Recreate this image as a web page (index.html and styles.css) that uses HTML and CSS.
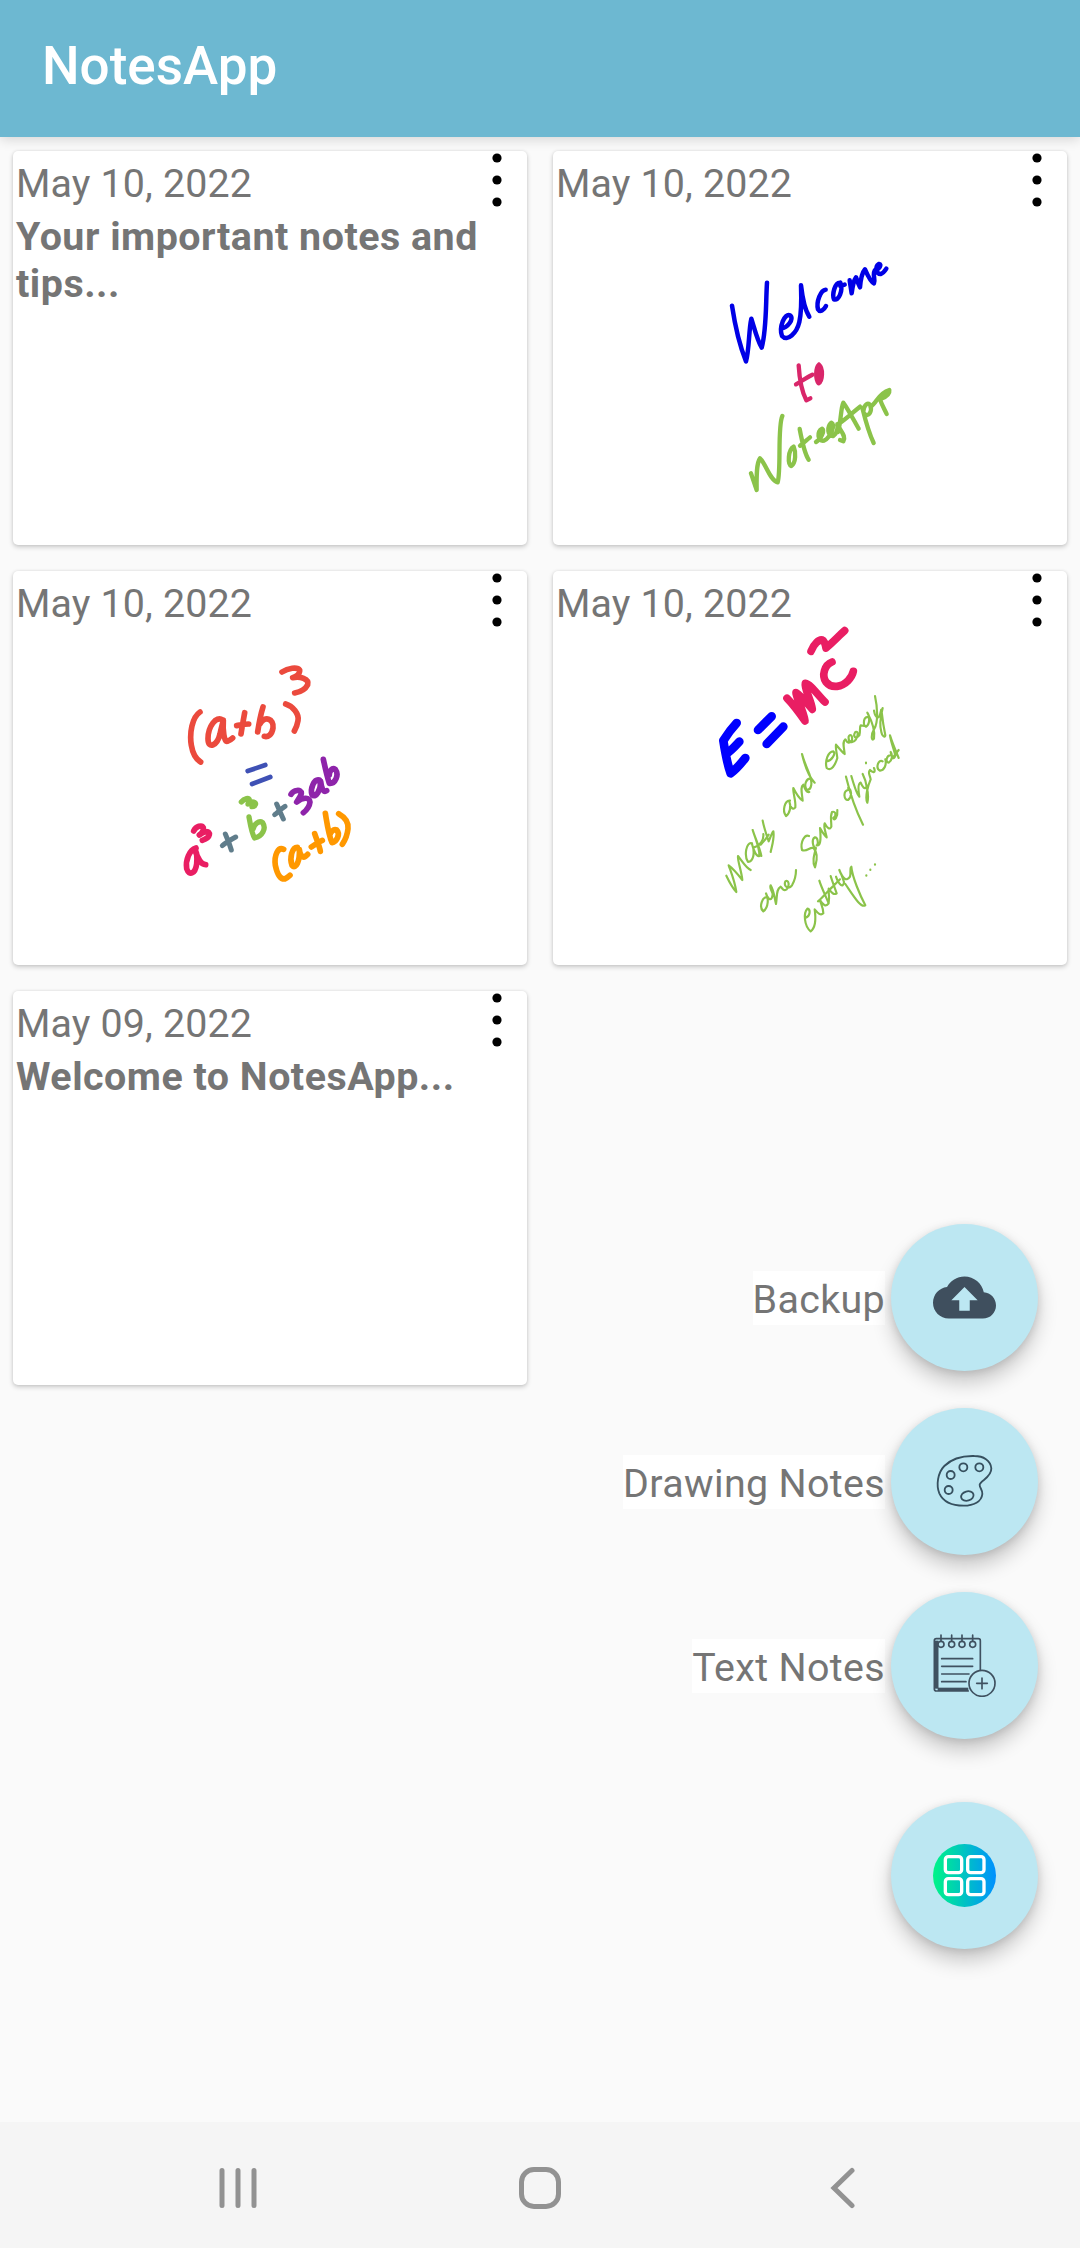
FILE: index.html
```html
<!DOCTYPE html>
<html lang="en">
  <head>
    <meta charset="UTF-8" />
    <meta name="viewport" content="width=device-width, initial-scale=1.0" />
    <title>NotesApp</title>
    <link rel="stylesheet" href="styles.css">
  </head>
  <body>
    <header class="toolbar">
      <h1>NotesApp</h1>
    </header>
    <main class="notes">
      <div class="card">
        <div class="date">May 10, 2022</div>
        <p class="text">Your important notes and tips...</p>
        <svg class="menu" viewBox="0 0 10 54"><circle cx="5" cy="5" r="4.6" /><circle cx="5" cy="27" r="4.6" /><circle cx="5" cy="49" r="4.6" /></svg>
      </div>
      <div class="card">
        <div class="date">May 10, 2022</div>
        <svg class="menu" viewBox="0 0 10 54"><circle cx="5" cy="5" r="4.6" /><circle cx="5" cy="27" r="4.6" /><circle cx="5" cy="49" r="4.6" /></svg>
        <svg class="drawing" viewBox="-441 -267 1542 1182">
          <g stroke="#0000e6" stroke-width="13.5">
            <path d="M96 197C104 250 118 315 138 364C148 330 146 270 154 236C164 268 172 302 185 323C200 270 197 190 201 128" />
            <path d="M244 265C262 264 284 236 270 226C254 218 236 262 246 288C262 306 290 280 298 246C306 210 304 165 303 136C308 180 316 212 328 230" />
            <path d="M377 149C362 150 348 186 354 208C360 218 372 210 378 198" />
            <path d="M421 128C404 126 396 164 402 178C416 184 430 152 421 128M421 138L434 134" />
            <path d="M449 121L455 160C458 136 462 120 468 112C472 124 476 134 480 142C482 118 488 96 495 88C502 104 512 126 522 130C528 118 514 100 527 88C536 92 548 70 536 72C524 80 530 104 542 102C550 100 554 94 559 86" />
          </g>
          <g stroke="#d9266a" stroke-width="13">
            <path d="M296 376C298 410 306 456 319 481L331 475M288 433C304 424 320 412 337 404" />
            <path d="M357 374C346 384 346 418 356 430C368 424 370 384 357 374M357 392V414" />
          </g>
          <g stroke="#8bc34a" stroke-width="13">
            <path d="M153 700L170 750C170 716 168 672 180 655C196 668 210 722 233 727C244 690 232 560 247 528" />
            <path d="M281 620C264 630 262 672 274 678C288 668 288 636 281 620" />
            <path d="M299 567C306 604 314 642 326 659M300 617C312 608 320 600 330 592" />
            <path d="M348 606C362 598 376 572 366 566C350 572 352 606 372 602C394 590 406 554 394 548C380 560 382 590 400 588C412 580 414 562 412 552C420 572 440 588 430 604L420 600" />
            <path d="M414 576C424 540 422 504 430 488C446 510 462 542 476 566M424 546C444 532 462 514 480 500" />
            <path d="M487 504C496 540 508 582 521 609M490 516C492 492 506 484 512 498C516 516 506 528 498 524" />
            <path d="M512 500C530 490 534 460 568 450C570 462 556 472 540 478C546 496 554 508 560 522" />
          </g>
        </svg>
      </div>
      <div class="card">
        <div class="date">May 10, 2022</div>
        <svg class="menu" viewBox="0 0 10 54"><circle cx="5" cy="5" r="4.6" /><circle cx="5" cy="27" r="4.6" /><circle cx="5" cy="49" r="4.6" /></svg>
        <svg class="drawing" viewBox="-441 -207 1542 1182">
          <g stroke="#eb4a3d" stroke-width="17">
            <path d="M120 216C96 232 88 280 94 316C98 340 108 358 122 366" />
            <path d="M188 240C168 226 144 260 144 296C144 330 172 316 180 282C184 262 188 250 190 240C188 270 192 306 202 304C208 302 214 298 218 294" />
            <path d="M254 218C250 240 246 262 243 282M230 257C242 255 254 252 266 252" />
            <path d="M309 201C300 230 296 256 293 276M300 252C314 226 342 236 339 264C336 284 324 292 313 289" />
            <path d="M377 192C398 198 418 222 414 242C412 256 408 264 403 273" />
            <path d="M366 96C384 84 412 80 419 90C420 102 408 110 398 113C420 108 448 116 443 134C436 148 420 156 404 159" />
          </g>
          <g stroke="#3f51b5" stroke-width="14">
            <path d="M263 393L316 375M276 432L331 411" />
          </g>
          <g stroke="#e91e63" stroke-width="17">
            <path d="M108 624C88 630 76 660 80 686C88 710 106 700 110 672C112 650 110 632 104 628C112 650 120 674 137 674" />
            <path d="M101 573C108 558 126 554 130 563C132 574 124 580 118 585C134 572 150 572 148 584C146 594 136 598 127 601" />
          </g>
          <g stroke="#607d8b" stroke-width="15">
            <path d="M196 582C204 600 210 616 214 630M187 617C200 606 214 598 227 591" />
            <path d="M350 492C358 510 364 524 370 537M344 524C354 516 364 506 375 499" />
          </g>
          <g stroke="#8bc34a" stroke-width="16">
            <path d="M267 531C272 560 276 584 284 594C306 590 320 566 308 548C296 540 282 554 280 566" />
            <path d="M244 486C252 476 270 470 268 482C266 488 264 490 264 492C276 482 290 486 286 494C284 500 280 500 276 500" />
          </g>
          <g stroke="#8e24aa" stroke-width="17">
            <path d="M393 463C400 450 424 446 424 460C422 470 414 480 410 486C430 470 450 472 450 486C448 504 438 512 430 518" />
            <path d="M478 420C462 416 450 446 456 464C468 476 482 450 482 424C484 440 488 460 500 452" />
            <path d="M490 358C496 386 502 412 508 430C526 432 538 404 526 388C516 382 508 394 508 404" />
          </g>
          <g stroke="#ff9800" stroke-width="17">
            <path d="M371 628C354 620 342 646 346 676C352 704 362 718 374 717C382 714 386 710 390 706" />
            <path d="M412 622C396 622 388 654 396 676C408 690 420 662 418 628C420 646 428 660 443 643" />
            <path d="M464 581C470 600 478 616 481 634M454 621C464 614 476 606 487 601" />
            <path d="M496 520C502 556 506 586 516 608C530 606 542 582 530 570C520 566 512 576 510 584" />
            <path d="M536 521C552 530 566 546 564 566C562 586 554 602 547 613" />
          </g>
        </svg>
      </div>
      <div class="card">
        <div class="date">May 10, 2022</div>
        <svg class="menu" viewBox="0 0 10 54"><circle cx="5" cy="5" r="4.6" /><circle cx="5" cy="27" r="4.6" /><circle cx="5" cy="49" r="4.6" /></svg>
        <svg class="drawing" viewBox="-411 -117 1542 1182">
          <g stroke="#0000ff" stroke-width="26">
            <path d="M140 339C124 356 110 376 100 392C106 430 112 464 122 490C138 478 152 462 166 444M108 432C122 424 136 408 148 395" />
            <path d="M204 360L245 319M230 402L280 350" />
          </g>
          <g stroke="#e91e63" stroke-width="23">
            <path d="M291 265C306 280 330 312 345 333C340 300 318 262 318 248C332 256 352 280 367 298C364 270 342 236 346 220C362 222 384 256 405 276" />
            <path d="M426 156C404 164 394 196 408 216C426 238 456 230 474 212C484 202 488 194 490 184" />
            <path d="M363 124C370 104 388 84 400 92C406 98 406 106 408 114C428 98 446 78 464 62" />
          </g>
          <g stroke="#8bc34a" stroke-width="6.5">
            <path d="M109 797C118 816 128 834 139 846C134 812 122 784 116 766C130 776 146 796 157 810C154 780 142 752 144 738C156 752 166 772 182 780" />
            <path d="M186 700C168 694 162 738 174 756C190 754 196 730 186 702C190 720 200 742 208 738C210 716 196 686 188 660C198 690 210 716 214 738M192 712C210 708 222 690 220 672" />
            <path d="M218 632C222 654 230 676 236 694C242 680 246 668 250 664C254 684 246 706 242 726M212 704C222 694 230 684 236 674" />
            <path d="M300 572C284 570 276 604 288 618C300 610 304 588 298 574C300 592 308 602 316 592C318 570 308 548 310 534C318 550 328 566 338 572C336 550 330 530 340 524C346 540 350 548 358 546" />
            <path d="M362 506C350 504 340 524 350 540C366 540 368 516 358 492C350 472 340 448 336 432C344 466 356 500 374 518" />
            <path d="M410 454C426 452 438 430 430 424C414 424 404 454 410 474C424 486 436 464 442 444C440 426 436 414 438 404C448 416 456 426 464 432C462 410 456 396 466 388C472 400 480 402 486 390C488 376 480 370 476 380C474 398 488 402 498 388C506 374 504 362 496 366C488 378 496 390 508 376C512 362 508 352 512 346L524 348" />
            <path d="M534 322C520 318 518 346 528 350C540 344 540 318 532 308C544 330 556 362 552 386C544 396 542 374 552 358C566 336 562 290 555 258M552 302C556 326 568 330 572 306C576 286 572 308 586 376C586 384 576 380 574 366C568 346 572 318 578 294" />
            <path d="M234 862C216 858 206 892 220 904C236 892 236 864 228 850C234 870 246 876 248 852C244 838 238 834 242 826C252 842 254 866 258 882C262 858 258 838 272 830C280 838 280 844 290 838C300 826 296 808 286 814C280 830 296 840 306 826C314 812 318 796 318 780" />
            <path d="M357 678C344 672 330 696 336 720C350 728 364 706 372 716C388 734 378 760 375 772C366 756 372 736 378 714C368 712 364 688 374 682C384 680 386 704 380 706C390 708 394 694 390 654C398 668 404 678 410 682C406 662 400 650 404 640C412 656 420 660 424 650C424 630 420 620 426 606C438 602 440 618 430 624C432 636 444 622 442 600" />
            <path d="M468 500C480 550 500 606 519 644M474 540C458 544 462 572 474 570C488 560 484 536 474 534M484 498C492 526 500 552 508 560C504 536 504 520 512 518C518 532 524 540 530 530C528 514 522 500 518 492M530 530C534 546 536 562 532 578C524 562 534 526 542 508C540 494 532 488 540 480C550 490 558 488 552 474M528 458V460" />
            <path d="M578 454C564 446 556 476 570 482C584 480 590 464 586 448M604 436C588 434 586 458 596 458C608 450 608 434 602 426C606 446 612 450 616 436C610 414 602 392 600 376C608 402 618 424 626 444M606 446L626 420" />
            <path d="M346 924C362 918 362 898 352 896C340 908 342 948 362 964C378 952 378 926 374 898C384 910 392 918 400 910C400 892 392 882 390 870C398 884 408 892 416 880C406 856 394 832 388 812M384 874C400 860 414 842 430 828M416 878C420 858 414 844 416 836C424 848 432 856 440 850C434 832 426 812 422 798M416 842L450 808" />
            <path d="M438 800C446 824 460 836 462 816C456 796 450 784 448 780C458 806 470 816 480 800C484 782 478 776 484 770C486 800 512 860 526 886C512 894 492 860 466 822" />
            <path d="M529 796V797M541 779V780M555 763V764" />
          </g>
        </svg>
      </div>
      <div class="card">
        <div class="date">May 09, 2022</div>
        <p class="text">Welcome to NotesApp...</p>
        <svg class="menu" viewBox="0 0 10 54"><circle cx="5" cy="5" r="4.6" /><circle cx="5" cy="27" r="4.6" /><circle cx="5" cy="49" r="4.6" /></svg>
      </div>
    </main>

    <!-- floating actions -->
    <div class="actions">
      <div class="action">
        <span class="label">Backup</span>
        <button class="fab" type="button">
          <svg viewBox="0 0 24 24" fill="#3f4f5e"><path d="M19.35 10.04C18.67 6.59 15.64 4 12 4 9.11 4 6.6 5.64 5.35 8.04 2.34 8.36 0 10.91 0 14c0 3.31 2.69 6 6 6h13c2.76 0 5-2.24 5-5 0-2.64-2.05-4.78-4.65-4.96zM14 13v4h-4v-4H7l5-5 5 5h-3z" /></svg>
        </button>
      </div>
      <div class="action">
        <span class="label">Drawing Notes</span>
        <button class="fab" type="button">
          <svg viewBox="0 0 189 189" fill="none" stroke="#36505f" stroke-width="5.5">
            <path d="M124 18C88 17 54 28 34 48C14 68 9 106 19 130C31 156 60 167 92 167C122 167 146 155 148 132C149 119 139 113 140 104C142 91 176 83 175 55C173 31 151 18 124 18Z" />
            <circle cx="91" cy="52" r="12" />
            <circle cx="139" cy="52" r="12" />
            <circle cx="53" cy="75" r="12" />
            <circle cx="47" cy="120" r="12" />
            <ellipse cx="103" cy="138" rx="19" ry="14" transform="rotate(-16 103 138)" />
          </svg>
        </button>
      </div>
      <div class="action">
        <span class="label">Text Notes</span>
        <button class="fab" type="button">
          <svg viewBox="0 0 189 189" fill="none" stroke="#3f5160" stroke-width="5" stroke-linecap="round">
            <path d="M106 171H10Q4 171 4 165V20Q4 14 10 14H136Q142 14 142 20V107" />
            <path d="M10 20V164" stroke-width="13" stroke-linecap="butt" />
            <path d="M14 166H106" stroke-width="10" stroke-linecap="butt" />
            <path d="M26 74H119M26 97H119M26 120H108M26 143H99" />
            <g fill="#bce7f2">
              <circle cx="24" cy="31" r="9" /><circle cx="56" cy="31" r="9" /><circle cx="87" cy="31" r="9" /><circle cx="119" cy="31" r="9" />
              <circle cx="147" cy="148" r="39" />
            </g>
            <path d="M24 3V21M56 3V21M87 3V21M119 3V21M147 132V164M131 148H163" />
          </svg>
        </button>
      </div>
      <div class="action main-action">
        <button class="fab" type="button">
          <svg viewBox="0 0 189 189" fill="none" stroke="#fff" stroke-width="10">
            <defs>
              <linearGradient id="grid"><stop offset="0" stop-color="#00f587" /><stop offset="1" stop-color="#0090ff" /></linearGradient>
            </defs>
            <circle cx="94.500" cy="94.500" r="94.500" fill="url(#grid)" stroke="none" />
            <rect x="37" y="38" width="49" height="48" rx="9" />
            <rect x="104" y="38" width="49" height="48" rx="9" />
            <rect x="37" y="104" width="49" height="48" rx="9" />
            <rect x="104" y="104" width="49" height="48" rx="9" />
          </svg>
        </button>
      </div>
    </div>

    <nav class="navbar">
      <svg viewBox="0 0 42 42"><path d="M5 3.500V38.500M21 3.500V38.500M37 3.500V38.500" /></svg>
      <svg viewBox="0 0 42 42"><rect x="2.500" y="2.500" width="37" height="37" rx="12.500" /></svg>
      <svg viewBox="0 0 42 42"><path d="M31 3.500L13 21L31 38.500" /></svg>
    </nav>
  </body>
</html>
```

FILE: styles.css
```css
* {
  box-sizing: border-box;
}
body {
  margin: 0;
  height: 2248px;
  display: flex;
  flex-direction: column;
  position: relative;
  background: #fafafa;
  font-family: Roboto, "Liberation Sans", sans-serif;
  color: #757575;
}
.toolbar {
  height: 137px;
  flex: none;
  display: flex;
  align-items: center;
  padding: 0 42px 5px;
  background: #6db8d1;
  box-shadow: 0 2px 12px rgba(0, 0, 0, 0.16);
}
h1 {
  margin: 0;
  font-size: 53px;
  font-weight: 500;
  color: #ffffff;
}
.notes {
  flex: 1;
  display: grid;
  grid-template-columns: 1fr 1fr;
  grid-auto-rows: 394px;
  gap: 26px;
  padding: 14px 13px 0;
}
.card {
  position: relative;
  padding: 9px 3px;
  background: #ffffff;
  border-radius: 5px;
  box-shadow: 0 2px 5px rgba(0, 0, 0, 0.2), 0 0 3px rgba(0, 0, 0, 0.08);
}
.date {
  font-size: 39.4px;
  line-height: 47px;
  letter-spacing: 0.15px;
}
.text {
  margin: 6px 0 0;
  width: 480px;
  font-size: 39.4px;
  line-height: 47px;
  font-weight: 700;
  letter-spacing: 0.5px;
}
.menu {
  position: absolute;
  top: 2px;
  right: 25px;
  width: 10px;
  height: 54px;
}
.drawing {
  position: absolute;
  top: 0;
  left: 0;
  width: 100%;
  height: 100%;
  fill: none;
  stroke-linecap: round;
  stroke-linejoin: round;
}
.actions {
  position: absolute;
  right: 42px;
  top: 1224px;
  display: flex;
  flex-direction: column;
  align-items: flex-end;
  gap: 37px;
}
.action {
  display: flex;
  align-items: center;
  gap: 6px;
}
.main-action {
  margin-top: 26px;
}
.label {
  padding-top: 4px;
  background: #ffffff;
  font-size: 39.4px;
  line-height: 50px;
  letter-spacing: 0.35px;
}
.fab {
  display: flex;
  align-items: center;
  justify-content: center;
  width: 147px;
  height: 147px;
  padding: 0;
  border: 0;
  border-radius: 50%;
  background: #bce7f2;
  box-shadow: 0 12px 20px rgba(0, 0, 0, 0.2), 0 2px 8px rgba(0, 0, 0, 0.12);
}
.fab svg {
  width: 63px;
  height: 63px;
}
.navbar {
  height: 126px;
  flex: none;
  display: flex;
  justify-content: center;
  align-items: center;
  gap: 260px;
  padding-top: 6px;
  background: #f5f5f5;
}
.navbar svg {
  width: 42px;
  height: 42px;
  fill: none;
  stroke: #929292;
  stroke-width: 5;
  stroke-linecap: round;
}
```
